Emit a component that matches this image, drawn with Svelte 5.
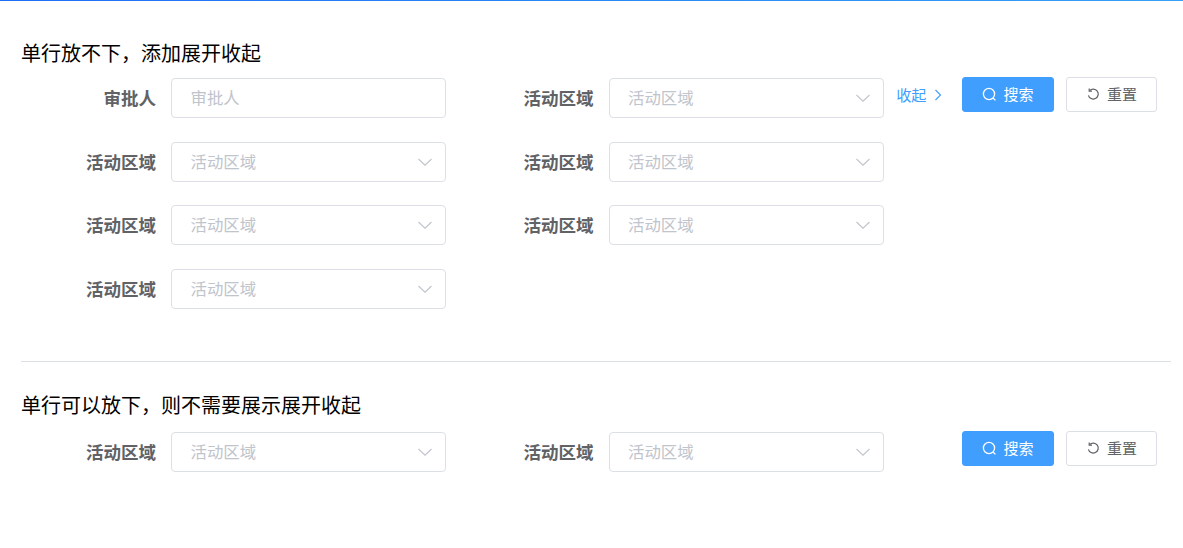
<script>
  const longFields = [
    { label: "审批人", type: "input" },
    { label: "活动区域", type: "select" },
    { label: "活动区域", type: "select" },
    { label: "活动区域", type: "select" },
    { label: "活动区域", type: "select" },
    { label: "活动区域", type: "select" },
    { label: "活动区域", type: "select" },
  ];
  const shortFields = [
    { label: "活动区域", type: "select" },
    { label: "活动区域", type: "select" },
  ];

  let expanded = $state(true);
  let visibleFields = $derived(expanded ? longFields : longFields.slice(0, 2));
</script>

{#snippet fields(list)}
  <div class="fields">
    {#each list as field}
      <div class="field">
        <span class="label">{field.label}</span>
        <div class="control">
          <input type="text" placeholder={field.label} readonly={field.type === "select"} />
          {#if field.type === "select"}
            <svg class="arrow" width="16" height="16" viewBox="0 0 16 16" fill="none">
              <path d="M1.5 5 8 11.2 14.5 5" stroke="#c0c4cc" stroke-width="1.1" />
            </svg>
          {/if}
        </div>
      </div>
    {/each}
  </div>
{/snippet}

{#snippet buttons()}
  <button class="btn primary">
    <svg width="15" height="15" viewBox="0 0 15 15" fill="none">
      <circle cx="7" cy="7" r="5.6" stroke="#fff" stroke-width="1.3" />
      <path d="M11 11l2.4 2.4" stroke="#fff" stroke-width="1.3" />
    </svg>
    <span>搜索</span>
  </button>
  <button class="btn">
    <svg width="15" height="15" viewBox="0 0 15 15" fill="none">
      <path d="M3.6 3.6A5 5 0 1 1 2.4 8.3" stroke="#606266" stroke-width="1.2" />
      <path d="M3.2 1.4v2.8h2.8" stroke="#606266" stroke-width="1.2" />
    </svg>
    <span>重置</span>
  </button>
{/snippet}

<main>
  <section class="first">
    <h2>单行放不下，添加展开收起</h2>
    <div class="form">
      {@render fields(visibleFields)}
      <div class="actions">
        <button class="toggle" onclick={() => (expanded = !expanded)}>
          <span>{expanded ? "收起" : "展开"}</span>
          <svg width="10" height="12" viewBox="0 0 10 12" fill="none">
            <path d="M2.5 1 7.5 6 2.5 11" stroke="#409eff" stroke-width="1.1" />
          </svg>
        </button>
        {@render buttons()}
      </div>
    </div>
  </section>

  <hr />

  <section class="second">
    <h2>单行可以放下，则不需要展示展开收起</h2>
    <div class="form">
      {@render fields(shortFields)}
      <div class="actions">
        {@render buttons()}
      </div>
    </div>
  </section>
</main>

<style>
  :global(body) {
    background: #fff;
  }

  main {
    min-height: 548px;
    box-sizing: border-box;
    padding: 40px 12px 0 21px;
    border-top: 1px solid transparent;
    border-image: linear-gradient(to right, #1d6ff5, #36a0f5) 1;
    font-family: "Noto Sans CJK SC", "Liberation Sans", sans-serif;
  }

  h2 {
    margin: 0;
    height: 37px;
    font-size: 20px;
    font-weight: 400;
    line-height: 23px;
    color: #000;
  }

  .first {
    min-height: 320px;
  }

  .second h2 {
    margin-top: -1px;
    height: 39px;
  }

  .form {
    display: flex;
    align-items: flex-start;
  }

  .fields {
    display: grid;
    grid-template-columns: repeat(2, 425px);
    column-gap: 12.6px;
    row-gap: 23.5px;
  }

  .field {
    display: flex;
    align-items: center;
    gap: 15px;
    height: 40px;
  }

  .label {
    width: 135px;
    padding-bottom: 1px;
    text-align: right;
    font-size: 17.5px;
    font-weight: 700;
    color: #606266;
    white-space: nowrap;
  }

  .control {
    position: relative;
    width: 275px;
    height: 40px;
  }

  input {
    width: 100%;
    height: 100%;
    box-sizing: border-box;
    padding: 0 18.5px 2px;
    border: 1px solid #dcdfe6;
    border-radius: 4px;
    outline: none;
    font-family: inherit;
    font-size: 16.4px;
    color: #606266;
    background: #fff;
  }

  input::placeholder {
    color: #c0c4cc;
  }

  .arrow {
    position: absolute;
    top: 12px;
    right: 13px;
    pointer-events: none;
  }

  .actions {
    display: flex;
    align-items: center;
    flex: 1;
    justify-content: flex-end;
    margin-top: -1px;
    padding-right: 14px;
  }

  .btn {
    display: inline-flex;
    align-items: center;
    justify-content: center;
    gap: 6px;
    width: 91px;
    height: 35px;
    margin-left: 12px;
    padding: 0;
    border: 1px solid #dcdfe6;
    border-radius: 3px;
    background: #fff;
    color: #606266;
    font-family: inherit;
    font-size: 15px;
    cursor: pointer;
  }

  .btn span,
  .toggle span {
    position: relative;
    top: -1px;
  }

  .btn.primary {
    width: 92px;
    border-color: #409eff;
    background: #409eff;
    color: #fff;
  }

  .toggle {
    display: inline-flex;
    align-items: center;
    gap: 6px;
    margin-right: 7.5px;
    padding: 0;
    border: none;
    background: none;
    color: #409eff;
    font-family: inherit;
    font-size: 15.2px;
    cursor: pointer;
  }

  hr {
    height: 1px;
    margin: 0 0 32px;
    border: none;
    background: #dcdfe6;
  }
</style>
